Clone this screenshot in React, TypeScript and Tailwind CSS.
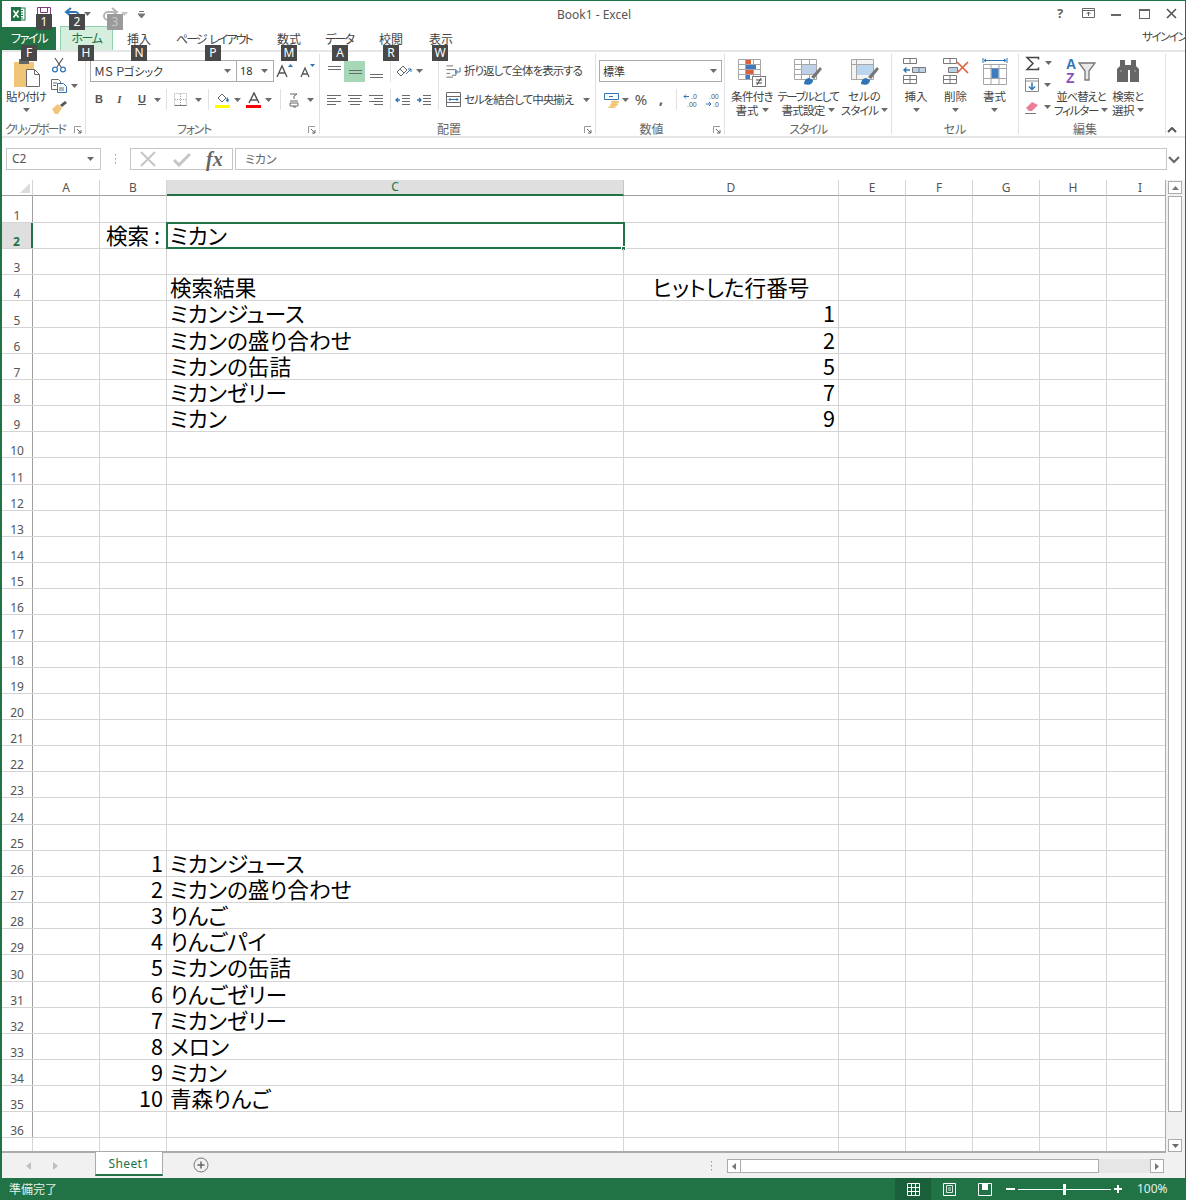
import type { ReactNode } from 'react';

const rows: Record<number, { b?: string; c?: string; d?: string; center?: boolean }> = {
  2: { b: '検索 :', c: 'ミカン' },
  4: { c: '検索結果', d: 'ヒットした行番号', center: true },
  5: { c: 'ミカンジュース', d: '1' },
  6: { c: 'ミカンの盛り合わせ', d: '2' },
  7: { c: 'ミカンの缶詰', d: '5' },
  8: { c: 'ミカンゼリー', d: '7' },
  9: { c: 'ミカン', d: '9' },
  26: { b: '1', c: 'ミカンジュース' },
  27: { b: '2', c: 'ミカンの盛り合わせ' },
  28: { b: '3', c: 'りんご' },
  29: { b: '4', c: 'りんごパイ' },
  30: { b: '5', c: 'ミカンの缶詰' },
  31: { b: '6', c: 'りんごゼリー' },
  32: { b: '7', c: 'ミカンゼリー' },
  33: { b: '8', c: 'メロン' },
  34: { b: '9', c: 'ミカン' },
  35: { b: '10', c: '青森りんご' },
};

const rowNumbers = Array.from({ length: 36 }, (_, i) => i + 1);

function Caret({ className = '' }: { className?: string }) {
  return (
    <svg width="7" height="4" viewBox="0 0 7 4" className={`shrink-0 ${className}`}>
      <path d="M0 0h7L3.5 4z" fill="#6a6a6a" />
    </svg>
  );
}

function Launcher() {
  return (
    <svg width="8" height="8" viewBox="0 0 8 8" className="absolute right-[3px] top-[4px]">
      <path d="M.5 7V.5H7" fill="none" stroke="#9a9a9a" />
      <path d="M3 3l4 4M7 4v3H4" fill="none" stroke="#666" />
    </svg>
  );
}

function VSep() {
  return <div className="w-px h-[21px] bg-[#e1e1e1] shrink-0" />;
}

function Group({ w, label, labelClass = '', launcher, children }: { w: string; label: string; labelClass?: string; launcher?: boolean; children: ReactNode }) {
  return (
    <div className={`${w} h-[80px] shrink-0 border-r border-[#e1e1e1] flex flex-col`}>
      <div className="h-[68px]">{children}</div>
      <div className={`relative h-[12px] text-center text-[12px] leading-[14px] text-[#666] ${launcher ? 'pr-[17px]' : ''}`}>
        <span className={`whitespace-nowrap ${labelClass}`}>{label}</span>
        {launcher && <Launcher />}
      </div>
    </div>
  );
}

function Small({ w, children, className = '' }: { w: string; children: ReactNode; className?: string }) {
  return <div className={`${w} h-[21px] shrink-0 flex items-center justify-center gap-[5px] ${className}`}>{children}</div>;
}

function Big({ w, icon, lines, caretInline }: { w: string; icon: ReactNode; lines: ReactNode[]; caretInline?: boolean }) {
  return (
    <div className={`${w} shrink-0 flex flex-col items-center pt-[3px] text-[11.5px] leading-[14px] text-[#444]`}>
      <div className="h-[32px] flex items-start justify-center">{icon}</div>
      {lines.map((l, i) => (
        <div key={i} className="whitespace-nowrap flex items-center gap-[3px]">
          {l}
          {caretInline && i === lines.length - 1 && <Caret />}
        </div>
      ))}
      {!caretInline && <Caret className="mt-[5px]" />}
    </div>
  );
}

function AlignLines({ type }: { type: 'top' | 'mid' | 'bot' | 'left' | 'center' | 'right' }) {
  const d = {
    top: 'M2 3.5h13M2 6.5h13',
    mid: 'M2 7.5h13M2 10.5h13',
    bot: 'M2 11.5h13M2 14.5h13',
    left: 'M1 3.5h14M1 6.5h9M1 9.5h14M1 12.5h9',
    center: 'M1 3.5h14M3 6.5h10M1 9.5h14M3 12.5h10',
    right: 'M1 3.5h14M6 6.5h9M1 9.5h14M6 12.5h9',
  }[type];
  return (
    <svg width="16" height="16" viewBox="0 0 16 16">
      <path d={d} stroke="#6a6a6a" fill="none" />
    </svg>
  );
}

function ExcelLogo() {
  return (
    <svg width="16" height="16" viewBox="0 0 16 16">
      <rect x="6" y="2" width="9" height="12" fill="#fff" stroke="#217346" />
      <path d="M9 4.5h4M9 7h4M9 9.5h4M9 12h4" stroke="#217346" />
      <rect x="1" y="1" width="10" height="14" fill="#217346" />
      <path d="M3.5 4.5l5 7M8.5 4.5l-5 7" stroke="#fff" strokeWidth="1.6" />
    </svg>
  );
}

function SheetIcon({ children }: { children: ReactNode }) {
  return (
    <svg width="30" height="30" viewBox="0 0 30 30">
      {children}
    </svg>
  );
}

const gridLines = 'M1.5 2.5h22v20h-22zM1.5 7.5h22M1.5 12.5h22M1.5 17.5h22M8.5 2.5v20M16.5 2.5v20';

function KeyTip({ label, className = '', faded }: { label: string; className?: string; faded?: boolean }) {
  return (
    <div
      className={`absolute w-[16px] h-[16px] flex items-center justify-center text-[12px] leading-none font-['Noto_Sans',sans-serif] ${
        faded ? 'bg-[#9a9a9a] text-[#c8c8c8]' : 'bg-[#484848] text-white'
      } ${className}`}
    >
      {label}
    </div>
  );
}

function SheetCell({ w, className = '', children }: { w: string; className?: string; children?: ReactNode }) {
  return <div className={`${w} shrink-0 h-full border-r border-[#d4d4d4] whitespace-nowrap ${className}`}>{children}</div>;
}

function ColHead({ w, label, active }: { w: string; label: string; active?: boolean }) {
  return (
    <div
      className={`${w} shrink-0 h-full flex items-center justify-center text-[12px] leading-[12px] border-r ${
        active ? 'bg-[#dfdfdf] border-[#c6c6c6] text-[#217346] border-b-2 border-b-[#217346]' : 'border-[#d4d4d4] text-[#555] border-b border-b-[#9f9f9f]'
      }`}
    >
      {label}
    </div>
  );
}

export default function App() {
  return (
    <div className="w-[1186px] h-[1200px] overflow-hidden relative flex flex-col bg-white border-l-2 border-r border-[#217346] text-[#444] font-['Noto_Sans_CJK_JP','Noto_Sans',sans-serif] [font-feature-settings:'palt']">
      {/* title bar */}
      <div className="h-[26px] shrink-0 border-t border-[#217346] flex items-center">
        <div className="ml-[8px] mt-[1px]"><ExcelLogo /></div>
        <svg width="16" height="16" viewBox="0 0 16 16" className="ml-[10px]">
          <path d="M1.5 1.5h13v13h-13z" fill="#fff" stroke="#80397b" />
          <path d="M4.5 1.5v5h7v-5" fill="none" stroke="#80397b" />
        </svg>
        <svg width="18" height="14" viewBox="0 0 18 14" className="ml-[12px]">
          <path d="M3 5h8a4 4 0 010 8H7" fill="none" stroke="#2f75b5" strokeWidth="2" />
          <path d="M7 1L2 5l5 4" fill="none" stroke="#2f75b5" strokeWidth="2" />
        </svg>
        <Caret className="ml-[2px]" />
        <svg width="18" height="14" viewBox="0 0 18 14" className="ml-[10px]">
          <path d="M15 5H7a4 4 0 000 8h4" fill="none" stroke="#b5b5b5" strokeWidth="2" />
          <path d="M11 1l5 4-5 4" fill="none" stroke="#b5b5b5" strokeWidth="2" />
        </svg>
        <Caret className="ml-[2px] opacity-40" />
        <svg width="7" height="8" viewBox="0 0 7 8" className="ml-[10px]">
          <path d="M1 1.5h5M0 4h7l-3.5 4z" stroke="#777" fill="#777" strokeWidth="1" />
        </svg>
        <div className="absolute left-0 w-[1183px] text-center text-[12px] text-[#555] font-['Noto_Sans',sans-serif] top-[6px] pl-[1px]">Book1 - Excel</div>
        <div className="ml-auto flex items-center gap-[12px] pr-[8px] text-[#666]">
          <span className="text-[13px] font-bold font-['Noto_Sans',sans-serif] w-[10px]">?</span>
          <svg width="14" height="11" viewBox="0 0 14 11" className="ml-[3px]">
            <path d="M.5.5h12v9H.5zM.5 2.5h12" fill="none" stroke="#666" />
            <path d="M6.5 8V4M4.5 6l2-2 2 2" fill="none" stroke="#666" />
          </svg>
          <div className="w-[10px] h-[2px] bg-[#666] mt-[3px] ml-[3px]" />
          <div className="w-[11px] h-[10px] border border-[#666] border-t-[2px] ml-[6px]" />
          <svg width="11" height="11" viewBox="0 0 11 11" className="ml-[4px]">
            <path d="M1 1l9 9M10 1l-9 9" stroke="#555" strokeWidth="1.6" />
          </svg>
        </div>
      </div>

      {/* tabs */}
      <div className="h-[24px] shrink-0 relative flex items-end text-[12px] leading-[22px]">
        <div className="w-[54px] h-[23px] bg-[#217346] text-white text-center shrink-0 tracking-[-1.3px]">ファイル</div>
        <div className="ml-[4px] w-[53px] h-[24px] bg-[#d5eede] border-x border-t border-[#92d0aa] text-[#217346] text-center shrink-0 tracking-[-1.5px]">ホーム</div>
        <div className="ml-[14px] w-[22px] text-center whitespace-nowrap shrink-0">挿入</div>
        <div className="ml-[27px] w-[74px] text-left whitespace-nowrap shrink-0 tracking-[-2px] [word-spacing:3px]">ページ レイアウト</div>
        <div className="ml-[27px] w-[22px] text-center whitespace-nowrap shrink-0">数式</div>
        <div className="ml-[26px] w-[28px] text-left whitespace-nowrap shrink-0 tracking-[-1.8px]">データ</div>
        <div className="ml-[26px] w-[22px] text-center whitespace-nowrap shrink-0">校閲</div>
        <div className="ml-[28px] w-[22px] text-center whitespace-nowrap shrink-0">表示</div>
        <div className="ml-auto mb-[3px] text-[11.5px] text-[#444] whitespace-nowrap w-[43px] tracking-[-1.4px]">サインイン</div>
      </div>

      {/* ribbon */}
      <div className="h-[88px] shrink-0 border-y-2 border-[#e6e6e6] flex pt-[2px] text-[#444] text-[11.5px]">
        <Group w="w-[84px]" label="クリップボード" labelClass="tracking-[-2px]" launcher>
          <div className="flex">
            <div className="w-[48px] flex flex-col items-center pt-[3px] leading-[14px]">
              <svg width="30" height="30" viewBox="0 0 30 30" className="shrink-0 ml-[4px]">
                <rect x="1" y="5" width="20" height="25" fill="#f0c577" />
                <rect x="6" y="2" width="10" height="5" fill="#666" />
                <path d="M13.5 12.5h8l5 5v12h-13z" fill="#fff" stroke="#6a6a6a" />
                <path d="M21.5 12.5v5h5" fill="none" stroke="#6a6a6a" />
              </svg>
              <div className="mt-[2px] whitespace-nowrap tracking-[-1px]">貼り付け</div>
              <Caret className="mt-[5px]" />
            </div>
            <div className="flex flex-col">
              <div className="h-[21px] pl-[1px] flex items-center">
                <svg width="16" height="16" viewBox="0 0 16 16">
                  <path d="M4 1l6 9M12 1L6 10" stroke="#555" strokeWidth="1.2" />
                  <circle cx="4" cy="12.5" r="2.4" fill="none" stroke="#2f75b5" strokeWidth="1.2" />
                  <circle cx="12" cy="12.5" r="2.4" fill="none" stroke="#2f75b5" strokeWidth="1.2" />
                </svg>
              </div>
              <div className="h-[21px] pl-[1px] flex items-center gap-[4px]">
                <svg width="16" height="14" viewBox="0 0 16 14">
                  <path d="M.5.5h7l2 2v8h-9z" fill="#fff" stroke="#6a6a6a" />
                  <path d="M6.5 4.5h6l3 3v6h-9z" fill="#fff" stroke="#2f75b5" />
                  <path d="M2 4h4M2 6.5h3M8 9h5M8 11h5" stroke="#6a6a6a" />
                </svg>
                <Caret />
              </div>
              <div className="h-[21px] pl-[1px] flex items-center">
                <svg width="16" height="14" viewBox="0 0 16 14">
                  <path d="M1 9l6-5 4 4-4 6H4z" fill="#f0c577" />
                  <path d="M9 5l5-4 2 2-5 4z" fill="#555" />
                </svg>
              </div>
            </div>
          </div>
        </Group>

        <Group w="w-[234px]" label="フォント" labelClass="tracking-[-1.3px]" launcher>
          <div className="pt-[6px] pl-[4px]">
            <div className="flex items-center h-[22px]">
              <div className="w-[147px] h-[22px] border border-[#ababab] flex items-center justify-between pl-[3px] pr-[5px] text-[11px] text-[#333]">
                <span>ＭＳ Ｐゴシック</span>
                <Caret />
              </div>
              <div className="w-[37px] h-[22px] border border-l-0 border-[#ababab] flex items-center justify-between pl-[3px] pr-[5px] text-[11px] text-[#333]">
                <span className="font-['Noto_Sans',sans-serif]">18</span>
                <Caret />
              </div>
              <svg width="18" height="16" viewBox="0 0 18 16" className="ml-[2px]">
                <path d="M1 14L6 3l5 11M3 10h6" fill="none" stroke="#555" strokeWidth="1.4" />
                <path d="M12 4l2.5-3 2.5 3z" fill="#2f75b5" />
              </svg>
              <svg width="16" height="16" viewBox="0 0 16 16" className="ml-[6px]">
                <path d="M1 14l4-9 4 9M2.5 11h5" fill="none" stroke="#555" strokeWidth="1.3" />
                <path d="M10 1h5l-2.5 3z" fill="#2f75b5" />
              </svg>
            </div>
            <div className="flex items-center mt-[7px] -ml-[1px] text-[#555]">
              <Small w="w-[20px]"><span className="text-[11px] font-bold font-['Liberation_Sans',sans-serif]">B</span></Small>
              <Small w="w-[21px]"><span className="text-[11px] italic font-bold font-['Liberation_Serif',serif]">I</span></Small>
              <Small w="w-[36px]" className="pl-[3px]">
                <span className="text-[11px] font-bold font-['Liberation_Sans',sans-serif] underline">U</span>
                <Caret className="ml-[3px]" />
              </Small>
              <VSep />
              <Small w="w-[41px]" className="pl-[1px]">
                <svg width="14" height="14" viewBox="0 0 14 14">
                  <path d="M.5.5h12v12H.5z" fill="none" stroke="#aaa" strokeDasharray="1 1" />
                  <path d="M6.5 1v12M1 6.5h12" stroke="#aaa" strokeDasharray="1 1" />
                  <path d="M.5 12.5h12" stroke="#777" />
                </svg>
                <Caret className="ml-[2px]" />
              </Small>
              <VSep />
              <Small w="w-[34px]" className="pl-[3px]">
                <svg width="16" height="16" viewBox="0 0 16 16">
                  <path d="M3 6l4-4 4 4-4 4z" fill="#fff" stroke="#666" />
                  <path d="M12 5l2 3-1 2-2-1z" fill="#2f75b5" />
                  <rect y="13" width="15" height="3" fill="#ffff00" />
                </svg>
                <Caret className="-ml-[2px]" />
              </Small>
              <Small w="w-[37px]" className="pr-[6px]">
                <svg width="16" height="16" viewBox="0 0 16 16">
                  <path d="M3 11L8 1l5 10M5 8h6" fill="none" stroke="#555" strokeWidth="1.5" />
                  <rect y="13" width="15" height="3" fill="#ff0000" />
                </svg>
                <Caret className="-ml-[2px]" />
              </Small>
              <VSep />
              <Small w="w-[38px]" className="pl-[2px]">
                <svg width="12" height="16" viewBox="0 0 12 16">
                  <path d="M2 2h7L6 4v3M2 9h8M2 11h8v3H2zM5 15h3" fill="none" stroke="#666" />
                </svg>
                <Caret className="ml-[2px]" />
              </Small>
            </div>
          </div>
        </Group>

        <Group w="w-[276px]" label="配置" launcher>
          <div className="pt-[6px] pl-[4px] flex">
            <div className="flex flex-col gap-[7px] shrink-0">
              <div className="flex items-center h-[22px]">
                <div className="w-[20px] h-[21px] flex items-center justify-center"><AlignLines type="top" /></div>
                <div className="w-[21px] h-[21px] bg-[#a6d8b8] flex items-center justify-center"><AlignLines type="mid" /></div>
                <div className="w-[21px] h-[21px] flex items-center justify-center"><AlignLines type="bot" /></div>
                <div className="w-[4px]" />
                <VSep />
                <Small w="w-[47px]" className="justify-start pl-[4px]">
                  <svg width="18" height="14" viewBox="0 0 18 14" className="shrink-0">
                    <path d="M2 8l6-6 4 4-6 6zM5 5l4 4" fill="none" stroke="#666" />
                    <path d="M11 10l5-5M13 5h3v3" fill="none" stroke="#2f75b5" />
                  </svg>
                  <Caret className="-ml-[2px]" />
                </Small>
              </div>
              <div className="flex items-center h-[21px]">
                <div className="w-[20px] flex justify-center"><AlignLines type="left" /></div>
                <div className="w-[21px] flex justify-center"><AlignLines type="center" /></div>
                <div className="w-[21px] flex justify-center"><AlignLines type="right" /></div>
                <div className="w-[4px]" />
                <VSep />
                <div className="w-[47px] flex justify-start gap-[5px] pl-[4px]">
                  <svg width="16" height="14" viewBox="0 0 16 14" className="shrink-0">
                    <path d="M7 2.5h8M7 5.5h8M7 8.5h8M7 11.5h8" stroke="#6a6a6a" />
                    <path d="M5 7H1M3 5L1 7l2 2" fill="none" stroke="#2f75b5" strokeWidth="1.3" />
                  </svg>
                  <svg width="16" height="14" viewBox="0 0 16 14" className="shrink-0">
                    <path d="M7 2.5h8M7 5.5h8M7 8.5h8M7 11.5h8" stroke="#6a6a6a" />
                    <path d="M1 7h4M3 5l2 2-2 2" fill="none" stroke="#2f75b5" strokeWidth="1.3" />
                  </svg>
                </div>
              </div>
            </div>
            <div className="flex flex-col gap-[7px] w-[155px] shrink-0 border-l border-[#e1e1e1] pl-[7px] h-[50px] whitespace-nowrap tracking-[-1px]">
              <div className="flex items-center h-[22px] gap-[3px]">
                <svg width="15" height="15" viewBox="0 0 16 15" className="shrink-0">
                  <path d="M.5 1.5h7M.5 5.5h10v6h-4M.5 9.5h4M.5 13.5h7" fill="none" stroke="#6a6a6a" />
                  <path d="M15 3v5h-5M12 6l-2 2 2 2" fill="none" stroke="#2f75b5" />
                </svg>
                <span>折り返して全体を表示する</span>
              </div>
              <div className="flex items-center h-[21px] gap-[3px]">
                <svg width="15" height="15" viewBox="0 0 15 15" className="shrink-0">
                  <path d="M.5.5h14v14H.5zM.5 4.5h14M.5 10.5h14" fill="none" stroke="#6a6a6a" />
                  <path d="M3 7.5h9M4.5 6L3 7.500 4.5 9M10.5 6L12 7.5 10.500 9" fill="none" stroke="#2f75b5" />
                </svg>
                <span>セルを結合して中央揃え</span>
                <Caret className="ml-[7px]" />
              </div>
            </div>
          </div>
        </Group>

        <Group w="w-[129px]" label="数値" launcher>
          <div className="pt-[6px] pl-[3px]">
            <div className="w-[123px] h-[22px] border border-[#ababab] flex items-center justify-between pl-[3px] pr-[4px] text-[11px] text-[#333]">
              <span>標準</span>
              <Caret />
            </div>
            <div className="flex items-center mt-[7px] h-[21px]">
              <Small w="w-[31px]" className="pl-[3px]">
                <svg width="16" height="16" viewBox="0 0 16 16">
                  <path d="M.5 1.5h14v6H.5z" fill="none" stroke="#2f75b5" />
                  <ellipse cx="11" cy="10" rx="4" ry="1.5" fill="#f0c577" />
                  <ellipse cx="10" cy="12.5" rx="4" ry="1.5" fill="#f0c577" />
                  <ellipse cx="8" cy="15" rx="4" ry="1" fill="#f0c577" />
                  <path d="M5 4.5h4" stroke="#2f75b5" />
                </svg>
                <Caret className="-ml-[3px]" />
              </Small>
              <Small w="w-[22px]"><span className="text-[15px] font-['Noto_Sans',sans-serif] text-[#555]">%</span></Small>
              <Small w="w-[18px]"><span className="text-[14px] font-bold font-['Noto_Sans',sans-serif] text-[#555] -mt-[3px]">,</span></Small>
              <div className="w-[6px]" />
              <VSep />
              <Small w="w-[22px]" className="ml-[3px]">
                <svg width="16" height="16" viewBox="0 0 16 16">
                  <path d="M6 4.5H1M3 2.5l-2 2 2 2" fill="none" stroke="#2f75b5" />
                  <text x="8" y="7" fontSize="7" fill="#555" fontFamily="Liberation Sans">.0</text>
                  <text x="4" y="15" fontSize="7" fill="#555" fontFamily="Liberation Sans">.00</text>
                </svg>
              </Small>
              <Small w="w-[22px]">
                <svg width="16" height="16" viewBox="0 0 16 16">
                  <text x="4" y="7" fontSize="7" fill="#555" fontFamily="Liberation Sans">.00</text>
                  <path d="M1 12h5M4 10l2 2-2 2" fill="none" stroke="#2f75b5" />
                  <text x="8" y="15" fontSize="7" fill="#555" fontFamily="Liberation Sans">.0</text>
                </svg>
              </Small>
            </div>
          </div>
        </Group>

        <Group w="w-[167px]" label="スタイル" labelClass="tracking-[-1.5px]">
          <div className="flex">
            <Big
              w="w-[54px]"
              caretInline
              lines={[<span className="tracking-[-0.7px]">条件付き</span>, '書式']}
              icon={
                <SheetIcon>
                  <path d={gridLines} fill="#fff" stroke="#a6a6a6" />
                  <rect x="9" y="3" width="5" height="4" fill="#d9603b" />
                  <rect x="9" y="8" width="10" height="4" fill="#4178be" />
                  <rect x="9" y="13" width="7" height="4" fill="#d9603b" />
                  <rect x="9" y="18" width="4" height="4" fill="#4178be" />
                  <rect x="15.5" y="19.5" width="13" height="10" fill="#fff" stroke="#777" />
                  <path d="M19 23h6M19 26h6M24 21l-4 7" stroke="#444" fill="none" />
                </SheetIcon>
              }
            />
            <Big
              w="w-[58px]"
              caretInline
              lines={[<span className="tracking-[-1.6px]">テーブルとして</span>, <span className="tracking-[-0.7px]">書式設定</span>]}
              icon={
                <SheetIcon>
                  <path d={gridLines} fill="#fff" stroke="#a6a6a6" />
                  <rect x="9" y="8" width="14" height="9" fill="#bcd0e8" />
                  <path d="M18 20l9-10 2 2-8 10z" fill="#777" />
                  <path d="M11 27c0-4 3-6 5-6l4 2c0 4-4 6-9 4z" fill="#2f75b5" />
                </SheetIcon>
              }
            />
            <Big
              w="w-[55px]"
              caretInline
              lines={['セルの', <span className="tracking-[-1px]">スタイル</span>]}
              icon={
                <SheetIcon>
                  <path d="M1.5 2.5h22v20h-22zM1.5 7.5h22M6.5 2.5v20" fill="#f3f3f3" stroke="#a6a6a6" />
                  <rect x="7" y="8" width="16" height="10" fill="#bcd5ee" />
                  <path d="M18 20l9-10 2 2-8 10z" fill="#777" />
                  <path d="M11 27c0-4 3-6 5-6l4 2c0 4-4 6-9 4z" fill="#2f75b5" />
                </SheetIcon>
              }
            />
          </div>
        </Group>

        <Group w="w-[127px]" label="セル">
          <div className="flex pl-[4px]">
            <Big
              w="w-[40px]"
              lines={['挿入']}
              icon={
                <SheetIcon>
                  <path d="M2.5 1.5h13v5h-13zM9 1.5v5M2.5 18.5h13v8h-13zM2.5 22.5h13M9 18.5v8" fill="#fff" stroke="#7a7a7a" />
                  <path d="M11.5 10.5h13v5h-13zM18 10.5v5" fill="#bcd0e8" stroke="#7a7a7a" />
                  <path d="M9 13H3M5.5 10.5L3 13l2.5 2.5" fill="none" stroke="#2f75b5" strokeWidth="1.4" />
                </SheetIcon>
              }
            />
            <Big
              w="w-[39px]"
              lines={['削除']}
              icon={
                <SheetIcon>
                  <path d="M2.5 1.5h13v5h-13zM9 1.5v5M2.5 18.5h13v8h-13zM2.5 22.5h13M9 18.5v8" fill="#fff" stroke="#7a7a7a" />
                  <path d="M7.5 10.5h9v5h-9z" fill="#bcd0e8" stroke="#7a7a7a" />
                  <path d="M16 5l11 11M27 5L16 16" stroke="#e0623a" strokeWidth="1.7" />
                </SheetIcon>
              }
            />
            <Big
              w="w-[39px]"
              lines={['書式']}
              icon={
                <SheetIcon>
                  <path d="M3 1v5M27 1v5M4 3.5h22M4 3.5l2-1.5M4 3.5l2 1.5M26 3.5L24 2M26 3.5L24 5" fill="none" stroke="#2f75b5" />
                  <path d="M3.5 7.5h23v20h-23zM3.5 11.5h23M11 7.5v20M19 7.5v20M3.5 21.5h23" fill="#fff" stroke="#a6a6a6" />
                  <rect x="11.5" y="11.5" width="7" height="9.5" fill="#3f7cbf" />
                </SheetIcon>
              }
            />
          </div>
        </Group>

        <Group w="w-[147px]" label="編集" labelClass="mr-[14px]">
          <div className="flex">
            <div className="w-[36px] flex flex-col -mt-[2px] pl-[6px]">
              <div className="h-[22px] flex items-center gap-[5px]">
                <svg width="15" height="15" viewBox="0 0 15 15">
                  <path d="M13.5 3.5V1.5H2l6 6-6 6h11.500v-2" fill="none" stroke="#444" strokeWidth="1.5" />
                </svg>
                <Caret />
              </div>
              <div className="h-[22px] flex items-center gap-[5px]">
                <svg width="14" height="14" viewBox="0 0 14 14">
                  <path d="M.5.5h13v13H.5zM.5 3h13" fill="#fff" stroke="#8a8a8a" />
                  <path d="M7 4.5v7M4 8.500l3 3 3-3" fill="none" stroke="#2f75b5" strokeWidth="1.5" />
                </svg>
                <Caret />
              </div>
              <div className="h-[22px] flex items-center gap-[5px]">
                <svg width="14" height="14" viewBox="0 0 14 14">
                  <path d="M1 8l6-6 6 3-6 6H4z" fill="#ea7f96" />
                  <path d="M0 13.5h11" stroke="#777" />
                </svg>
                <Caret />
              </div>
            </div>
            <div className="w-[54px] flex flex-col items-center pt-[3px] leading-[14px] text-[#444] ml-[-1px] tracking-[-1.2px]">
              <svg width="32" height="30" viewBox="0 0 32 30" className="shrink-0">
                <text x="1" y="12" fontSize="14" fontWeight="700" fill="#2f75b5" fontFamily="Liberation Sans">A</text>
                <text x="1" y="26" fontSize="14" fontWeight="700" fill="#8e4fc0" fontFamily="Liberation Sans">Z</text>
                <path d="M14 6h16l-6 8v9h-4v-9z" fill="#e8e8e8" stroke="#777" strokeWidth="1.3" />
              </svg>
              <div className="mt-[2px] whitespace-nowrap">並べ替えと</div>
              <div className="whitespace-nowrap flex items-center gap-[3px]">フィルター<Caret /></div>
            </div>
            <div className="w-[40px] flex flex-col items-center pt-[3px] leading-[14px] text-[#444] tracking-[-0.6px]">
              <svg width="28" height="30" viewBox="0 0 28 30" className="shrink-0">
                <path d="M6 3h5v5h6V3h5v6l3 3v13h-9V13h-2v12H3V12l3-3z" fill="#666" />
                <path d="M6 14h2M20 14h2" stroke="#aaa" />
              </svg>
              <div className="mt-[2px] whitespace-nowrap">検索と</div>
              <div className="whitespace-nowrap flex items-center gap-[3px]">選択<Caret /></div>
            </div>
          </div>
        </Group>
        <div className="flex-1 relative">
          <svg width="10" height="6" viewBox="0 0 10 6" className="absolute left-[1px] top-[73px]">
            <path d="M1 5l4-4 4 4" fill="none" stroke="#555" strokeWidth="2" />
          </svg>
        </div>
      </div>

      {/* formula bar */}
      <div className="h-[42px] shrink-0 flex items-start pt-[10px] text-[12px]">
        <div className="ml-[4px] w-[95px] h-[22px] border border-[#c6c6c6] flex items-center justify-between pl-[5px] pr-[6px] font-['Noto_Sans',sans-serif] text-[#555]">
          <span>C2</span>
          <Caret />
        </div>
        <svg width="3" height="12" viewBox="0 0 3 12" className="ml-[13px] mt-[5px]">
          <path d="M1 1h1v1.5H1zM1 5h1v1.5H1zM1 9h1v1.5H1z" fill="#999" />
        </svg>
        <div className="ml-[13px] w-[103px] h-[22px] border border-[#c6c6c6] flex items-center">
          <svg width="18" height="16" viewBox="0 0 18 16" className="ml-[8px] shrink-0">
            <path d="M2 1l14 14M16 1L2 15" stroke="#c6c6c6" strokeWidth="2" />
          </svg>
          <svg width="18" height="16" viewBox="0 0 18 16" className="ml-[16px] shrink-0">
            <path d="M1 9l5 5L17 3" fill="none" stroke="#c6c6c6" strokeWidth="3" />
          </svg>
          <span className="ml-[15px] text-[20px] leading-none italic font-bold font-['Liberation_Serif',serif] text-[#666]">fx</span>
        </div>
        <div className="ml-[2px] w-[932px] h-[22px] border border-[#c6c6c6] pl-[9px] text-[#666] leading-[20px]">ミカン</div>
        <svg width="12" height="8" viewBox="0 0 12 8" className="ml-[1px] mt-[8px]">
          <path d="M1 1l5 5 5-5" fill="none" stroke="#666" strokeWidth="2" />
        </svg>
      </div>

      {/* sheet */}
      <div className="h-[973px] shrink-0 flex">
        <div className="w-[1164px] shrink-0 flex flex-col border-b-2 border-r border-[#ababab] overflow-hidden">
          <div className="h-[16px] shrink-0 flex font-['Noto_Sans',sans-serif]">
            <div className="w-[31px] shrink-0 h-full border-r border-b border-[#d4d4d4] border-b-[#9f9f9f] flex items-end justify-end pr-[2px] pb-[2px]">
              <svg width="10" height="10" viewBox="0 0 10 10"><path d="M10 0v10H0z" fill="#dcdcdc" /></svg>
            </div>
            <ColHead w="w-[67px]" label="A" />
            <ColHead w="w-[67px]" label="B" />
            <ColHead w="w-[457px]" label="C" active />
            <ColHead w="w-[215px]" label="D" />
            <ColHead w="w-[67px]" label="E" />
            <ColHead w="w-[67px]" label="F" />
            <ColHead w="w-[67px]" label="G" />
            <ColHead w="w-[67px]" label="H" />
            <ColHead w="w-[67px]" label="I" />
          </div>
          {rowNumbers.map((n) => {
            const r = rows[n] ?? {};
            return (
              <div key={n} className={`${n === 1 ? 'h-[27px]' : 'h-[26.16px]'} shrink-0 flex border-b border-[#d4d4d4] text-[21.6px] leading-[24px] text-black`}>
                <div
                  className={`w-[31px] shrink-0 h-full border-r flex items-end justify-center text-[12px] leading-[12px] font-['Noto_Sans',sans-serif] ${
                    n === 2 ? 'bg-[#dfdfdf] border-r-2 border-[#217346] text-[#217346] font-bold' : 'border-[#9f9f9f] text-[#555]'
                  }`}
                >
                  {n}
                </div>
                <SheetCell w="w-[67px]" />
                <SheetCell w="w-[67px]" className={`text-right ${n === 2 ? 'pr-[6px]' : 'pr-[3px]'}`}>{r.b}</SheetCell>
                <SheetCell w="w-[457px]" className={`relative pl-[3px] ${n === 2 ? 'outline-2 outline-[#217346] -outline-offset-1' : ''}`}>
                  {r.c}
                  {n === 2 && <div className="absolute -right-[3px] -bottom-[3px] w-[5px] h-[5px] bg-[#217346] border border-white" />}
                </SheetCell>
                <SheetCell w="w-[215px]" className={`pr-[3px] ${r.center ? 'text-center pl-[3px]' : 'text-right'}`}>{r.d}</SheetCell>
                <SheetCell w="w-[67px]" />
                <SheetCell w="w-[67px]" />
                <SheetCell w="w-[67px]" />
                <SheetCell w="w-[67px]" />
                <SheetCell w="w-[67px]" />
              </div>
            );
          })}
          <div className="flex-1 flex">
            <SheetCell w="w-[31px]" className="border-[#9f9f9f]" />
            <SheetCell w="w-[67px]" />
            <SheetCell w="w-[67px]" />
            <SheetCell w="w-[457px]" />
            <SheetCell w="w-[215px]" />
            <SheetCell w="w-[67px]" />
            <SheetCell w="w-[67px]" />
            <SheetCell w="w-[67px]" />
            <SheetCell w="w-[67px]" />
            <SheetCell w="w-[67px]" />
          </div>
        </div>

        {/* vertical scrollbar */}
        <div className="w-[19px] shrink-0 bg-[#f1f1f1] flex flex-col items-center pt-[1px] pb-[1px] pr-[1px]">
          <div className="w-[14px] h-[13px] bg-white border border-[#ababab] flex items-center justify-center">
            <svg width="7" height="4" viewBox="0 0 7 4"><path d="M0 4h7L3.5 0z" fill="#777" /></svg>
          </div>
          <div className="w-[14px] h-[916px] mt-[2px] bg-white border border-[#ababab]" />
          <div className="flex-1" />
          <div className="w-[14px] h-[13px] bg-white border border-[#ababab] flex items-center justify-center">
            <Caret />
          </div>
        </div>
      </div>

      {/* sheet tabs */}
      <div className="h-[25px] shrink-0 bg-[#f1f1f1] flex items-start relative">
        <svg width="5" height="8" viewBox="0 0 5 8" className="ml-[24px] mt-[9px]"><path d="M5 0v8L0 4z" fill="#c0c0c0" /></svg>
        <svg width="5" height="8" viewBox="0 0 5 8" className="ml-[22px] mt-[9px]"><path d="M0 0v8l5-4z" fill="#c0c0c0" /></svg>
        <div className="ml-[37px] -mt-[1px] w-[68px] h-[24px] bg-white border-x border-[#ababab] border-b-2 border-b-[#217346] text-center text-[12px] leading-[24px] text-[#217346] font-['Noto_Sans',sans-serif] tracking-[0.4px]">
          Sheet1
        </div>
        <svg width="16" height="16" viewBox="0 0 16 16" className="ml-[30px] mt-[4px]">
          <circle cx="8" cy="8" r="7" fill="none" stroke="#777" />
          <path d="M8 4.5v7M4.5 8h7" stroke="#666" strokeWidth="1.5" />
        </svg>
        <svg width="3" height="12" viewBox="0 0 3 12" className="ml-[501px] mt-[7px]">
          <path d="M1 1h1v1.5H1zM1 5h1v1.5H1zM1 9h1v1.5H1z" fill="#999" />
        </svg>
        <div className="ml-[14px] mt-[6px] w-[437px] h-[14px] bg-[#e6e6e6] flex items-stretch">
          <div className="w-[14px] bg-white border border-[#ababab] flex items-center justify-center">
            <svg width="4" height="7" viewBox="0 0 4 7"><path d="M4 0v7L0 3.5z" fill="#777" /></svg>
          </div>
          <div className="w-[358px] bg-white border-y border-r border-[#ababab]" />
          <div className="flex-1" />
          <div className="w-[14px] bg-white border border-[#ababab] flex items-center justify-center">
            <svg width="4" height="7" viewBox="0 0 4 7"><path d="M0 0v7l4-3.5z" fill="#777" /></svg>
          </div>
        </div>
      </div>

      {/* status bar */}
      <div className="h-[22px] shrink-0 bg-[#217346] text-white flex items-center text-[12px]">
        <span className="ml-[7px] text-[#e6f0ea]">準備完了</span>
        <div className="ml-auto h-full flex items-center">
          <div className="w-[36px] h-full bg-[#19603a] flex items-center justify-center">
            <svg width="13" height="13" viewBox="0 0 13 13"><path d="M.5.5h12v12H.5zM.5 4.5h12M.5 8.5h12M4.5.5v12M8.5.5v12" fill="none" stroke="#fff" /></svg>
          </div>
          <div className="w-[36px] flex justify-center">
            <svg width="13" height="13" viewBox="0 0 13 13"><path d="M.5.5h12v12H.5z" fill="none" stroke="#fff" /><path d="M3.5 2.5h6v7h-6zM5 5h3M5 7h3" fill="none" stroke="#d8e8de" /></svg>
          </div>
          <div className="w-[36px] flex justify-center">
            <svg width="14" height="13" viewBox="0 0 14 13"><path d="M.5.5h13v12H.5z" fill="none" stroke="#fff" /><path d="M4 0h6v7H4z" fill="#fff" /></svg>
          </div>
          <span className="ml-[3px] w-[9px] h-[2px] bg-white" />
          <div className="ml-[3px] w-[93px] h-px bg-white relative">
            <div className="absolute left-[45px] -top-[5px] w-[3px] h-[11px] bg-white" />
          </div>
          <svg width="8" height="8" viewBox="0 0 8 8" className="ml-[3px]"><path d="M4 0v8M0 4h8" stroke="#fff" strokeWidth="2" /></svg>
          <span className="ml-[15px] mr-[18px] w-[30px] text-[#e6f0ea] font-['Noto_Sans',sans-serif]">100%</span>
        </div>
      </div>

      {/* access key tips */}
      <KeyTip label="1" className="left-[34px] top-[14px]" />
      <KeyTip label="2" className="left-[67px] top-[14px]" />
      <KeyTip label="3" className="left-[105px] top-[14px]" faded />
      <KeyTip label="F" className="left-[19px] top-[45px]" />
      <KeyTip label="H" className="left-[76px] top-[45px]" />
      <KeyTip label="N" className="left-[129px] top-[45px]" />
      <KeyTip label="P" className="left-[203px] top-[45px]" />
      <KeyTip label="M" className="left-[279px] top-[45px]" />
      <KeyTip label="A" className="left-[330px] top-[45px]" />
      <KeyTip label="R" className="left-[381px] top-[45px]" />
      <KeyTip label="W" className="left-[430px] top-[45px]" />
    </div>
  );
}
